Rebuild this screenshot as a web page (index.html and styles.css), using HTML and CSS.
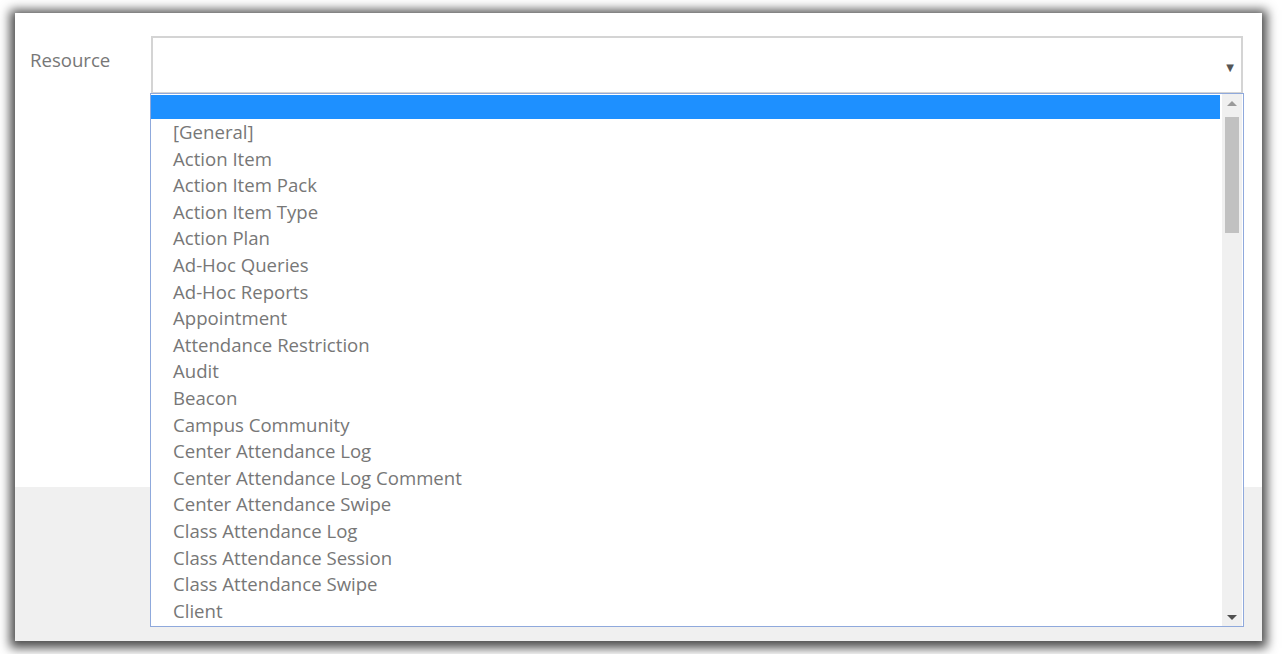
FILE: index.html
```html
<!DOCTYPE html>
<html>
<head>
<meta charset="utf-8">
<link rel="stylesheet" href="styles.css">
</head>
<body>
<div class="panel">
  <div class="form">
    <div class="row">
      <label class="label">Resource</label>
      <div class="field">
        <div class="select"><span class="caret">&#9660;</span></div>
        <div class="listbox">
          <div class="options">
            <div class="opt selected"></div>
            <div class="opt">[General]</div>
            <div class="opt">Action Item</div>
            <div class="opt">Action Item Pack</div>
            <div class="opt">Action Item Type</div>
            <div class="opt">Action Plan</div>
            <div class="opt">Ad-Hoc Queries</div>
            <div class="opt">Ad-Hoc Reports</div>
            <div class="opt">Appointment</div>
            <div class="opt">Attendance Restriction</div>
            <div class="opt">Audit</div>
            <div class="opt">Beacon</div>
            <div class="opt">Campus Community</div>
            <div class="opt">Center Attendance Log</div>
            <div class="opt">Center Attendance Log Comment</div>
            <div class="opt">Center Attendance Swipe</div>
            <div class="opt">Class Attendance Log</div>
            <div class="opt">Class Attendance Session</div>
            <div class="opt">Class Attendance Swipe</div>
            <div class="opt">Client</div>
          </div>
          <div class="scrollbar">
            <div class="sb-btn"><span class="tri-up"></span></div>
            <div class="thumb"></div>
            <div class="track"></div>
            <div class="sb-btn"><span class="tri-down"></span></div>
          </div>
        </div>
      </div>
    </div>
  </div>
  <div class="footer"></div>
</div>
</body>
</html>
```
FILE: styles.css
```css
html, body {
  margin: 0;
  padding: 0;
  background: #ffffff;
  width: 1282px;
  height: 654px;
  overflow: hidden;
}
body {
  padding: 13px 20px 13px 15px;
  box-sizing: border-box;
  font-family: "Open Sans", "DejaVu Sans", sans-serif;
}
.panel {
  width: 1247px;
  height: 628px;
  background: #f0f0f0;
  box-shadow: 0 2px 10px 5px rgba(0,0,0,0.7);
  display: flex;
  flex-direction: column;
  position: relative;
}
.form {
  background: #ffffff;
  height: 474px;
  padding: 23px 0 0 15px;
  box-sizing: border-box;
  position: relative;
  z-index: 1;
}
.row {
  display: flex;
}
.label {
  width: 120px;
  flex: none;
  font-size: 18.6px;
  color: #777777;
  line-height: 20px;
  padding-top: 14px;
}
.field {
  width: 1094px;
}
.select {
  height: 57px;
  border: 2px solid #d4d4d4;
  border-bottom-width: 1px;
  box-sizing: border-box;
  margin-left: 1px;
  width: 1092px;
  background: #fff;
  display: flex;
  justify-content: flex-end;
  align-items: center;
}
.caret {
  font-size: 10px;
  color: #555;
  margin-right: 7px;
  margin-top: 3px;
}
.listbox {
  width: 1094px;
  height: 534px;
  border: 1px solid #8fa9dc;
  box-sizing: border-box;
  background: #fff;
  display: flex;
  overflow: hidden;
}
.options {
  flex: 1;
  padding-top: 1px;
  overflow: hidden;
}
.opt {
  height: 26.6px;
  line-height: 25px;
  padding-left: 22px;
  font-size: 18.6px;
  color: #777777;
  white-space: nowrap;
}
.opt.selected {
  height: 24px;
  background: #1e90ff;
  margin-right: 2px;
}
.scrollbar {
  width: 20px;
  background: #f0f0f0;
  display: flex;
  flex-direction: column;
  margin-right: 1px;
}
.sb-btn {
  height: 23px;
  display: flex;
  align-items: center;
  justify-content: center;
}
.tri-up {
  width: 0; height: 0;
  border-left: 5px solid transparent;
  border-right: 5px solid transparent;
  border-bottom: 5px solid #9a9a9a;
  margin-top: -4px;
}
.tri-down {
  width: 0; height: 0;
  border-left: 5px solid transparent;
  border-right: 5px solid transparent;
  border-top: 5px solid #505050;
  margin-top: 6px;
}
.thumb {
  height: 116px;
  margin: 0 3px 0 3px;
  background: #c1c1c1;
}
.track {
  flex: 1;
}
.footer {
  flex: 1;
}
```
